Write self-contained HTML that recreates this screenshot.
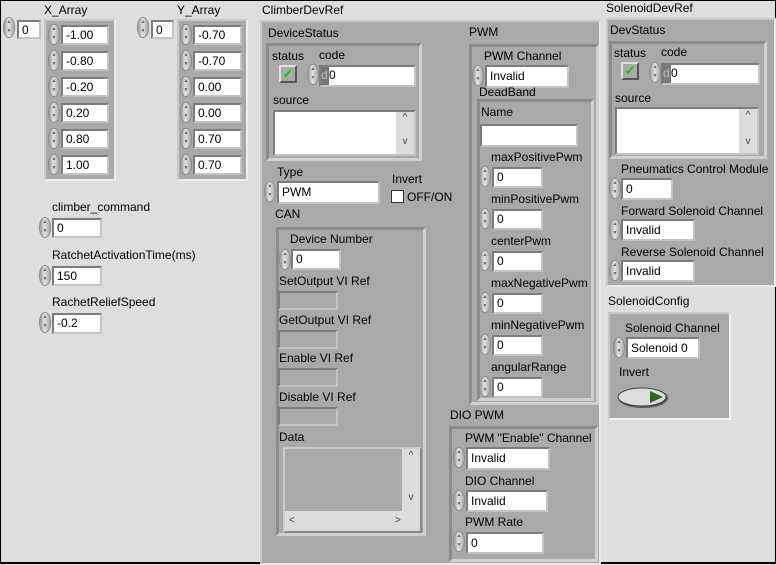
<!DOCTYPE html>
<html><head><meta charset="utf-8"><style>
*{box-sizing:border-box;margin:0;padding:0}
body{width:776px;height:564px;background:#dedede;font-family:"Liberation Sans",sans-serif;font-size:12px;color:#000;position:relative;overflow:hidden}
#win{position:absolute;left:0;top:0;width:776px;height:564px;border:1px solid #000;border-bottom-width:2px}
.a{position:absolute;white-space:nowrap}
.cl{position:absolute;background:#a9a9a9;border:2px solid;border-color:#c8c8c8 #e8e8e8 #e8e8e8 #c8c8c8}
.fr{position:absolute;border:3px solid;border-color:#8a8a8a #d0d0d0 #d0d0d0 #8a8a8a;background:#a9a9a9}
.bx{position:absolute;background:#fff;border:2px solid;border-color:#7c7c7c #c4c4c4 #c4c4c4 #7c7c7c;padding-left:3px;line-height:16px;font-size:12px}
.sp{position:absolute;width:12px;height:21px;border-radius:6px/10px;background:linear-gradient(90deg,#9a9a9a,#e4e4e4 45%,#a8a8a8);border:1px solid #8c8c8c;font-size:5px;line-height:9px;text-align:center;color:#666}
.gb{position:absolute;background:#a9a9a9;border:2px solid;border-color:#7c7c7c #c4c4c4 #c4c4c4 #7c7c7c}
.ck{position:absolute;width:18px;height:18px;background:#a9a9a9;border:2px solid;border-color:#e0e0e0 #555 #555 #e0e0e0;color:#0c0;font-size:13px;line-height:14px;text-align:center;font-weight:bold}
.sb{position:absolute;background:#dcdcdc;color:#444;font-size:10px;text-align:center}
</style></head><body><div id="win"></div>

<!-- arrays -->
<div class="a" style="left:44px;top:3px">X_Array</div>
<div class="sp" style="left:3px;top:17px">▲<br>▼</div>
<div class="bx" style="left:17px;top:20px;width:24px;height:19px">0</div>
<div class="fr" style="left:44px;top:19px;width:72px;height:162px;border-width:2px;border-color:#c8c8c8 #eee #eee #c8c8c8;background:#a9a9a9"></div>
<div class="a" style="left:177px;top:3px">Y_Array</div>
<div class="sp" style="left:137px;top:17px">▲<br>▼</div>
<div class="bx" style="left:151px;top:20px;width:23px;height:19px">0</div>
<div class="fr" style="left:177px;top:19px;width:71px;height:162px;border-width:2px;border-color:#c8c8c8 #eee #eee #c8c8c8;background:#a9a9a9"></div>

<div class="sp" style="left:48px;top:24px">▲<br>▼</div><div class="bx" style="left:61px;top:25px;width:48px;height:20px">-1.00</div>
<div class="sp" style="left:48px;top:50px">▲<br>▼</div><div class="bx" style="left:61px;top:51px;width:48px;height:20px">-0.80</div>
<div class="sp" style="left:48px;top:76px">▲<br>▼</div><div class="bx" style="left:61px;top:77px;width:48px;height:20px">-0.20</div>
<div class="sp" style="left:48px;top:102px">▲<br>▼</div><div class="bx" style="left:61px;top:103px;width:48px;height:20px">0.20</div>
<div class="sp" style="left:48px;top:128px">▲<br>▼</div><div class="bx" style="left:61px;top:129px;width:48px;height:20px">0.80</div>
<div class="sp" style="left:48px;top:154px">▲<br>▼</div><div class="bx" style="left:61px;top:155px;width:48px;height:20px">1.00</div>

<div class="sp" style="left:180px;top:24px">▲<br>▼</div><div class="bx" style="left:193px;top:25px;width:49px;height:20px">-0.70</div>
<div class="sp" style="left:180px;top:50px">▲<br>▼</div><div class="bx" style="left:193px;top:51px;width:49px;height:20px">-0.70</div>
<div class="sp" style="left:180px;top:76px">▲<br>▼</div><div class="bx" style="left:193px;top:77px;width:49px;height:20px">0.00</div>
<div class="sp" style="left:180px;top:102px">▲<br>▼</div><div class="bx" style="left:193px;top:103px;width:49px;height:20px">0.00</div>
<div class="sp" style="left:180px;top:128px">▲<br>▼</div><div class="bx" style="left:193px;top:129px;width:49px;height:20px">0.70</div>
<div class="sp" style="left:180px;top:154px">▲<br>▼</div><div class="bx" style="left:193px;top:155px;width:49px;height:20px">0.70</div>

<div class="a" style="left:52px;top:200px">climber_command</div>
<div class="sp" style="left:39px;top:217px">▲<br>▼</div><div class="bx" style="left:52px;top:218px;width:50px;height:20px">0</div>
<div class="a" style="left:52px;top:248px">RatchetActivationTime(ms)</div>
<div class="sp" style="left:39px;top:265px">▲<br>▼</div><div class="bx" style="left:52px;top:266px;width:50px;height:20px">150</div>
<div class="a" style="left:52px;top:295px">RachetReliefSpeed</div>
<div class="sp" style="left:39px;top:312px">▲<br>▼</div><div class="bx" style="left:52px;top:313px;width:50px;height:21px">-0.2</div>

<!-- ClimberDevRef -->
<div class="a" style="left:262px;top:3px">ClimberDevRef</div>
<div class="cl" style="left:260px;top:20px;width:341px;height:545px"></div>
<div class="a" style="left:268px;top:26px">DeviceStatus</div>
<div class="fr" style="left:266px;top:43px;width:156px;height:118px"></div>
<div class="a" style="left:272px;top:49px">status</div>
<div class="a" style="left:319px;top:48px">code</div>
<div class="ck" style="left:279px;top:65px">✓</div>
<div class="sp" style="left:307px;top:64px">▲<br>▼</div>
<div class="bx" style="left:319px;top:65px;width:97px;height:22px;padding-left:0"><span style="display:inline-block;width:8px;background:#777;color:#bbb;height:18px">d</span>0</div>
<div class="a" style="left:273px;top:93px">source</div>
<div class="bx" style="left:273px;top:110px;width:143px;height:46px"></div>
<div class="sb" style="left:396px;top:112px;width:18px;height:42px;line-height:12px">^<br><br>v</div>

<div class="a" style="left:277px;top:165px">Type</div>
<div class="sp" style="left:264px;top:181px">▲<br>▼</div>
<div class="bx" style="left:277px;top:181px;width:103px;height:23px;line-height:18px">PWM</div>
<div class="a" style="left:392px;top:172px">Invert</div>
<div style="position:absolute;left:391px;top:190px;width:13px;height:13px;background:#fff;border:1px solid #333"></div>
<div class="a" style="left:407px;top:190px">OFF/ON</div>

<div class="a" style="left:275px;top:207px">CAN</div>
<div class="fr" style="left:276px;top:227px;width:150px;height:309px"></div>
<div class="a" style="left:290px;top:232px">Device Number</div>
<div class="sp" style="left:279px;top:249px">▲<br>▼</div><div class="bx" style="left:291px;top:249px;width:50px;height:21px">0</div>
<div class="a" style="left:279px;top:274px">SetOutput VI Ref</div>
<div class="gb" style="left:278px;top:291px;width:60px;height:19px"></div>
<div class="a" style="left:279px;top:313px">GetOutput VI Ref</div>
<div class="gb" style="left:278px;top:330px;width:60px;height:19px"></div>
<div class="a" style="left:279px;top:351px">Enable VI Ref</div>
<div class="gb" style="left:278px;top:368px;width:60px;height:19px"></div>
<div class="a" style="left:279px;top:390px">Disable VI Ref</div>
<div class="gb" style="left:278px;top:407px;width:60px;height:19px"></div>
<div class="a" style="left:279px;top:430px">Data</div>
<div class="gb" style="left:283px;top:447px;width:139px;height:86px;border-color:#ccc #888 #888 #ccc"></div>
<div class="sb" style="left:402px;top:449px;width:18px;height:62px;line-height:14px">^<br><br><br>v</div>
<div class="sb" style="left:285px;top:511px;width:135px;height:20px;line-height:20px;text-align:left;padding-left:4px">&lt;<span style="position:absolute;left:110px">&gt;</span></div>

<!-- PWM -->
<div class="a" style="left:469px;top:25px">PWM</div>
<div class="fr" style="left:469px;top:44px;width:130px;height:361px"></div>
<div class="a" style="left:484px;top:49px">PWM Channel</div>
<div class="sp" style="left:472px;top:65px">▲<br>▼</div><div class="bx" style="left:485px;top:65px;width:84px;height:23px;line-height:18px">Invalid</div>
<div class="a" style="left:479px;top:85px">DeadBand</div>
<div class="fr" style="left:477px;top:99px;width:117px;height:302px"></div>
<div class="a" style="left:481px;top:105px">Name</div>
<div class="bx" style="left:480px;top:124px;width:98px;height:23px"></div>
<div class="a" style="left:491px;top:150px">maxPositivePwm</div>
<div class="sp" style="left:479px;top:166px">▲<br>▼</div><div class="bx" style="left:492px;top:167px;width:51px;height:21px">0</div>
<div class="a" style="left:491px;top:192px">minPositivePwm</div>
<div class="sp" style="left:479px;top:208px">▲<br>▼</div><div class="bx" style="left:492px;top:209px;width:51px;height:21px">0</div>
<div class="a" style="left:491px;top:234px">centerPwm</div>
<div class="sp" style="left:479px;top:250px">▲<br>▼</div><div class="bx" style="left:492px;top:251px;width:51px;height:21px">0</div>
<div class="a" style="left:491px;top:276px">maxNegativePwm</div>
<div class="sp" style="left:479px;top:292px">▲<br>▼</div><div class="bx" style="left:492px;top:293px;width:51px;height:21px">0</div>
<div class="a" style="left:491px;top:318px">minNegativePwm</div>
<div class="sp" style="left:479px;top:334px">▲<br>▼</div><div class="bx" style="left:492px;top:335px;width:51px;height:21px">0</div>
<div class="a" style="left:491px;top:360px">angularRange</div>
<div class="sp" style="left:479px;top:376px">▲<br>▼</div><div class="bx" style="left:492px;top:377px;width:51px;height:21px">0</div>

<div class="a" style="left:450px;top:408px">DIO PWM</div>
<div class="fr" style="left:449px;top:426px;width:149px;height:136px"></div>
<div class="a" style="left:465px;top:431px">PWM "Enable" Channel</div>
<div class="sp" style="left:453px;top:447px">▲<br>▼</div><div class="bx" style="left:466px;top:447px;width:84px;height:23px;line-height:18px">Invalid</div>
<div class="a" style="left:465px;top:474px">DIO Channel</div>
<div class="sp" style="left:453px;top:490px">▲<br>▼</div><div class="bx" style="left:466px;top:490px;width:82px;height:22px;line-height:18px">Invalid</div>
<div class="a" style="left:465px;top:515px">PWM Rate</div>
<div class="sp" style="left:453px;top:531px">▲<br>▼</div><div class="bx" style="left:466px;top:532px;width:78px;height:22px;line-height:18px">0</div>

<!-- SolenoidDevRef -->
<div class="a" style="left:606px;top:1px">SolenoidDevRef</div>
<div class="cl" style="left:606px;top:18px;width:170px;height:269px"></div>
<div class="a" style="left:610px;top:23px">DevStatus</div>
<div class="fr" style="left:609px;top:41px;width:158px;height:118px"></div>
<div class="a" style="left:614px;top:46px">status</div>
<div class="a" style="left:661px;top:45px">code</div>
<div class="ck" style="left:621px;top:62px">✓</div>
<div class="sp" style="left:649px;top:62px">▲<br>▼</div>
<div class="bx" style="left:661px;top:63px;width:99px;height:22px;padding-left:0"><span style="display:inline-block;width:8px;background:#777;color:#bbb;height:18px">d</span>0</div>
<div class="a" style="left:615px;top:91px">source</div>
<div class="bx" style="left:615px;top:107px;width:144px;height:48px"></div>
<div class="sb" style="left:739px;top:109px;width:18px;height:44px;line-height:13px">^<br><br>v</div>
<div class="a" style="left:621px;top:162px">Pneumatics Control Module</div>
<div class="sp" style="left:609px;top:178px">▲<br>▼</div><div class="bx" style="left:621px;top:178px;width:52px;height:22px;line-height:18px">0</div>
<div class="a" style="left:621px;top:204px">Forward Solenoid Channel</div>
<div class="sp" style="left:609px;top:219px">▲<br>▼</div><div class="bx" style="left:621px;top:219px;width:74px;height:22px;line-height:18px">Invalid</div>
<div class="a" style="left:621px;top:245px">Reverse Solenoid Channel</div>
<div class="sp" style="left:609px;top:260px">▲<br>▼</div><div class="bx" style="left:621px;top:260px;width:74px;height:22px;line-height:18px">Invalid</div>

<div class="a" style="left:608px;top:294px">SolenoidConfig</div>
<div class="cl" style="left:608px;top:312px;width:123px;height:108px;border-color:#c8c8c8 #f4f4f4 #f4f4f4 #c8c8c8"></div>
<div class="a" style="left:625px;top:321px">Solenoid Channel</div>
<div class="sp" style="left:613px;top:337px">▲<br>▼</div><div class="bx" style="left:626px;top:337px;width:74px;height:22px;line-height:18px">Solenoid 0</div>
<div class="a" style="left:619px;top:365px">Invert</div>
<svg style="position:absolute;left:616px;top:385px" width="56" height="26"><ellipse cx="27" cy="13" rx="25" ry="10" fill="#555"/><ellipse cx="26" cy="12" rx="24" ry="9" fill="#ddd" stroke="#444"/><path d="M34 6 L47 12 L34 18 Z" fill="#2a6a1a"/></svg>
</body></html>
